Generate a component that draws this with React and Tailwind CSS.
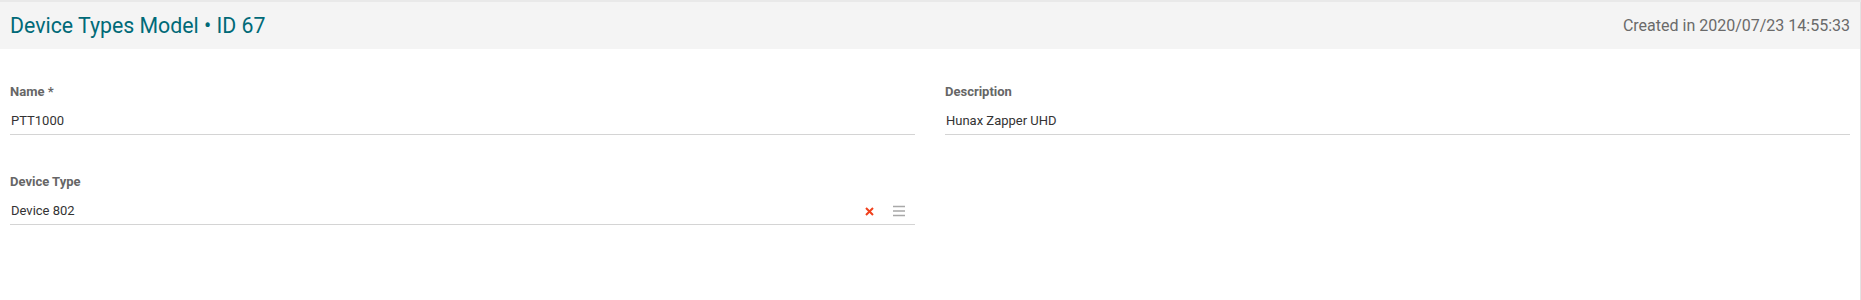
import React from 'react';

const Field = ({ label, value, children }) => (
    <div className="flex flex-col">
        <label className="text-[13px] leading-[16px] font-bold text-[#666666]">{label}</label>
        <div className="mt-[8px] h-[27px] flex items-center border-b border-[#d4d4d4]">
            <span className="flex-1 text-[13px] text-[#333333] pl-[1px]">{value}</span>
            {children}
        </div>
    </div>
);

export default function App() {
    return (
        <div
            className="w-[1861px] h-[300px] bg-white border-t-2 border-[#e9e9e9]"
            style={{ fontFamily: 'Roboto, "Noto Sans", sans-serif' }}
        >
            <div className="h-full border-r border-[#e2e2e2] flex flex-col">
                {/* Header */}
                <div className="h-[47px] bg-[#f4f4f4] flex items-center justify-between pl-[10px] pr-[10px]">
                    <h1 className="text-[21.3px] text-[#006a78] font-normal">Device Types Model • ID 67</h1>
                    <span className="text-[16px] text-[#6a6a6a]">Created in 2020/07/23 14:55:33</span>
                </div>

                {/* Form */}
                <div className="grid grid-cols-2 gap-x-[30px] gap-y-[39px] pl-[10px] pr-[10px] pt-[35px]">
                    <Field label="Name *" value="PTT1000" />
                    <Field label="Description" value="Hunax Zapper UHD" />
                    <Field label="Device Type" value="Device 802">
                        <button className="w-[16px] h-[16px] flex items-center justify-center mr-[14px]">
                            <svg width="9" height="9" viewBox="0 0 9 9">
                                <path d="M1 1L8 8M8 1L1 8" stroke="#f0401c" strokeWidth="2" />
                            </svg>
                        </button>
                        <button className="w-[16px] h-[16px] flex items-center justify-center mr-[8px]">
                            <svg width="14" height="14" viewBox="0 0 14 14">
                                <path d="M1 2.5H13M1 7H13M1 11.5H13" stroke="#a8a8a8" strokeWidth="1.5" />
                            </svg>
                        </button>
                    </Field>
                    <div />
                </div>
            </div>
        </div>
    );
}
